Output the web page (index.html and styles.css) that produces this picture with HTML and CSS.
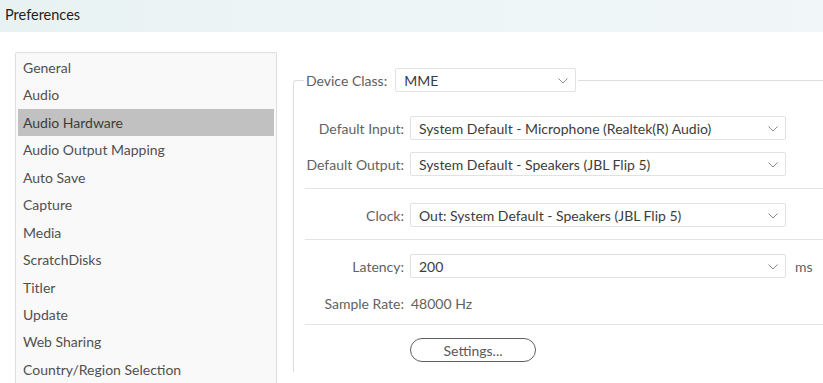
FILE: index.html
```html
<!DOCTYPE html>
<html>
<head>
<meta charset="utf-8">
<link rel="stylesheet" href="styles.css">
</head>
<body>
<div class="window">
  <header class="titlebar">Preferences</header>
  <main class="content">
    <ul class="nav">
      <li>General</li>
      <li>Audio</li>
      <li class="active">Audio Hardware</li>
      <li>Audio Output Mapping</li>
      <li>Auto Save</li>
      <li>Capture</li>
      <li>Media</li>
      <li>ScratchDisks</li>
      <li>Titler</li>
      <li>Update</li>
      <li>Web Sharing</li>
      <li>Country/Region Selection</li>
    </ul>
    <fieldset class="group">
      <legend class="legend">
        <span class="legend-label">Device Class:</span>
        <div class="select select-class"><span>MME</span>
          <svg class="chev" width="10" height="6" viewBox="0 0 10 6"><polyline points="0.5,0.5 5,5 9.5,0.5" fill="none" stroke="#8a8a8a" stroke-width="1"/></svg>
        </div>
      </legend>
      <div class="rows">
        <div class="row first">
          <span class="label">Default Input:</span>
          <div class="select"><span>System Default - Microphone (Realtek(R) Audio)</span>
            <svg class="chev" width="10" height="6" viewBox="0 0 10 6"><polyline points="0.5,0.5 5,5 9.5,0.5" fill="none" stroke="#8a8a8a" stroke-width="1"/></svg>
          </div>
        </div>
        <div class="row gap12">
          <span class="label">Default Output:</span>
          <div class="select"><span>System Default - Speakers (JBL Flip 5)</span>
            <svg class="chev" width="10" height="6" viewBox="0 0 10 6"><polyline points="0.5,0.5 5,5 9.5,0.5" fill="none" stroke="#8a8a8a" stroke-width="1"/></svg>
          </div>
        </div>
        <hr class="sep sep1">
        <div class="row after-sep">
          <span class="label">Clock:</span>
          <div class="select"><span>Out: System Default - Speakers (JBL Flip 5)</span>
            <svg class="chev" width="10" height="6" viewBox="0 0 10 6"><polyline points="0.5,0.5 5,5 9.5,0.5" fill="none" stroke="#8a8a8a" stroke-width="1"/></svg>
          </div>
        </div>
        <hr class="sep sep2">
        <div class="row after-sep2">
          <span class="label">Latency:</span>
          <div class="select"><span>200</span>
            <svg class="chev" width="10" height="6" viewBox="0 0 10 6"><polyline points="0.5,0.5 5,5 9.5,0.5" fill="none" stroke="#8a8a8a" stroke-width="1"/></svg>
          </div>
          <span class="unit">ms</span>
        </div>
        <div class="row rate">
          <span class="label">Sample Rate:</span>
          <span class="value">48000 Hz</span>
        </div>
        <hr class="sep sep3">
        <div class="row btn-row">
          <span class="label"></span>
          <button class="btn">Settings...</button>
        </div>
      </div>
    </fieldset>
  </main>
</div>
</body>
</html>
```

FILE: styles.css
```css
html, body {
  margin: 0;
  padding: 0;
  background: #ffffff;
}
body {
  width: 823px;
  height: 383px;
  overflow: hidden;
  font-family: Lato, "Open Sans", sans-serif;
  font-size: 14px;
}
.window {
  display: flex;
  flex-direction: column;
  height: 383px;
  overflow: hidden;
}
.titlebar {
  height: 32px;
  line-height: 30px;
  padding-left: 5px;
  color: #1e1e1e;
  font-size: 14.5px;
  background: linear-gradient(to right, #e9f2f3 0%, #eef5f6 60%, #f1f7f8 100%);
}
.content {
  display: flex;
  align-items: flex-start;
  padding: 20px 0 0 15px;
  gap: 16px;
  flex: 1;
  min-height: 0;
  overflow: hidden;
}
.nav {
  list-style: none;
  margin: 0;
  padding: 1px 2px 0 2px;
  width: 256px;
  height: 330px;
  overflow: hidden;
  flex: none;
  background: #f9f9f9;
  border: 1px solid #dedede;
  border-bottom: none;
  border-radius: 2px 2px 0 0;
}
.nav li {
  height: 27.45px;
  line-height: 27px;
  padding-left: 5px;
  color: #505050;
  white-space: nowrap;
}
.nav li.active {
  background: #c1c1c1;
  color: #3c3c3c;
}
.group {
  flex: 1;
  margin: 16px 0 0 0;
  padding: 0;
  border: 1px solid #dedede;
  border-right: none;
  border-bottom: none;
  border-radius: 3px 0 0 0;
  height: 303px;
  min-width: 0;
}
.legend {
  display: flex;
  align-items: center;
  margin-left: 10px;
  padding: 0 2px 0 2px;
  gap: 8px;
}
.legend-label {
  color: #5e5e5e;
}
.select {
  position: relative;
  display: flex;
  align-items: center;
  box-sizing: border-box;
  height: 24px;
  padding-left: 8px;
  border: 1px solid #e2e2e2;
  border-radius: 2px;
  background: #ffffff;
  color: #3c3c3c;
  white-space: nowrap;
}
.select-class {
  width: 181px;
}
.chev {
  position: absolute;
  right: 7px;
  top: 9px;
}
.rows {
  padding-top: 24px;
}
.row {
  display: grid;
  grid-template-columns: 110px 376px auto;
  column-gap: 6px;
  align-items: center;
  height: 24px;
}
.label {
  text-align: right;
  color: #626262;
  white-space: nowrap;
}
.gap12 {
  margin-top: 12px;
}
.sep {
  border: none;
  border-top: 1px solid #e3e3e3;
  margin: 0 0 0 11px;
  height: 0;
}
.sep1 {
  margin-top: 12px;
}
.after-sep {
  margin-top: 14px;
}
.sep2 {
  margin-top: 12px;
}
.after-sep2 {
  margin-top: 14px;
}
.unit {
  color: #626262;
  padding-left: 3px;
}
.rate {
  margin-top: 13px;
}
.value {
  color: #626262;
  padding-left: 1px;
}
.sep3 {
  margin-top: 9px;
}
.btn-row {
  margin-top: 13px;
}
.btn {
  width: 126px;
  height: 24px;
  box-sizing: border-box;
  border: 1.5px solid #5f5f5f;
  border-radius: 12px;
  background: #ffffff;
  color: #5a5a5a;
  font-family: Lato, "Open Sans", sans-serif;
  font-size: 14px;
  padding: 0;
}
```
